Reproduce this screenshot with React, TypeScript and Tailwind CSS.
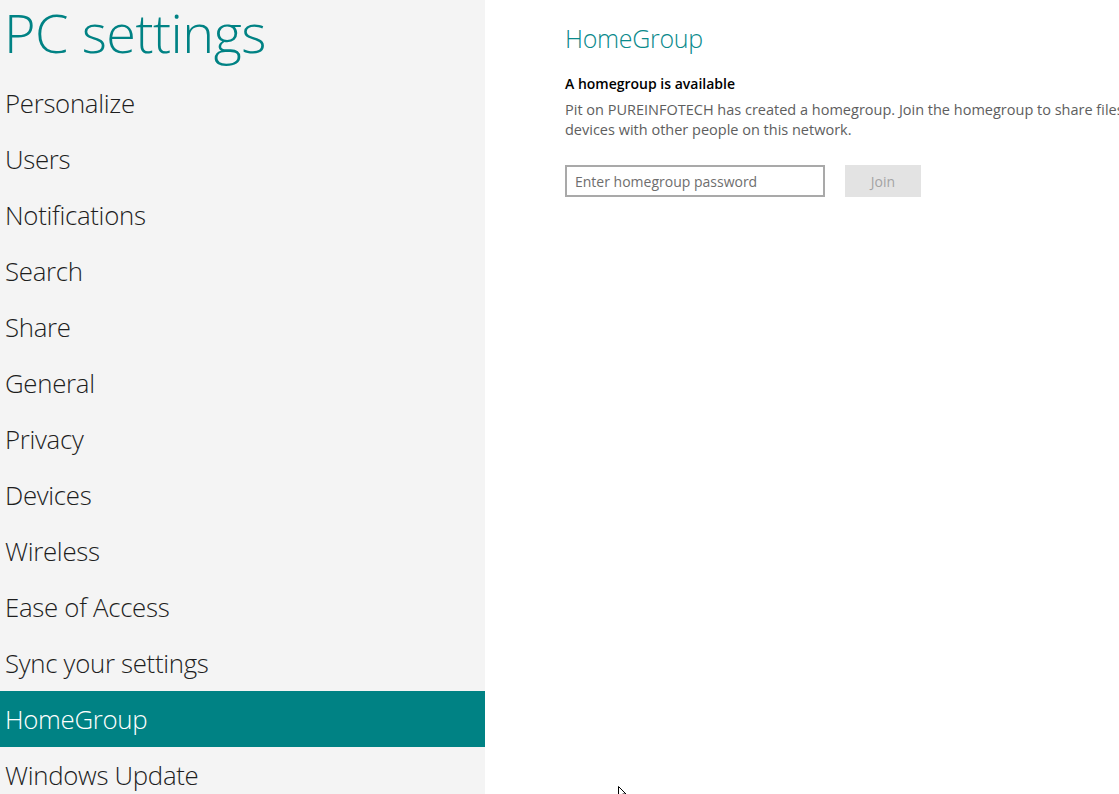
const menu = [
  "Personalize",
  "Users",
  "Notifications",
  "Search",
  "Share",
  "General",
  "Privacy",
  "Devices",
  "Wireless",
  "Ease of Access",
  "Sync your settings",
  "HomeGroup",
  "Windows Update",
];

const font = { fontFamily: '"Open Sans", "Noto Sans", sans-serif' };

export default function App() {
  return (
    <div className="relative flex h-[794px] w-[1119px] overflow-hidden bg-white" style={font}>
      <aside className="flex w-[485px] shrink-0 flex-col bg-[#f4f4f4]">
        <h1 className="h-[75px] shrink-0 pl-[4px] text-[54px] leading-[64px] font-light tracking-[-0.5px] text-[#008284]">
          PC settings
        </h1>
        {menu.map((item) => (
          <div
            key={item}
            className={`flex h-[56px] shrink-0 items-center pl-[5px] text-[25.8px] font-light tracking-[-0.3px] ${
              item === "HomeGroup" ? "bg-[#008284] text-white" : "text-[#1e1e1e]"
            }`}
          >
            {item}
          </div>
        ))}
      </aside>

      <main className="flex-1 pl-[80px] pt-[21px]">
        <h2 className="text-[25px] leading-[34px] font-light tracking-[-0.3px] text-[#0a8a8c]">HomeGroup</h2>
        <p className="mt-[19px] text-[14px] leading-[20px] font-semibold text-black">A homegroup is available</p>
        <p className="mt-[6px] w-[640px] text-[14.5px] leading-[20px] text-[#5e5e5e]">
          Pit on PUREINFOTECH has created a homegroup. Join the homegroup to share files and
          <br />
          devices with other people on this network.
        </p>
        <div className="mt-[25px] flex items-center gap-[20px]">
          <div className="flex h-[32px] w-[260px] items-center border-2 border-[#a9a9a9] bg-white pl-[8px] text-[14px] text-[#6e6e6e]">
            Enter homegroup password
          </div>
          <button className="h-[32px] w-[76px] bg-[#e3e3e3] text-[14px] text-[#a3a3a3]">Join</button>
        </div>
      </main>

      <svg className="absolute left-[618px] top-[786px]" width="9" height="14" viewBox="0 0 9 14">
        <path d="M0.5 0.5 L0.5 11 L3 8.5 L5 13 L6.5 12.3 L4.6 8 L8 8 Z" fill="#fff" stroke="#000" strokeWidth="1" />
      </svg>
    </div>
  );
}
